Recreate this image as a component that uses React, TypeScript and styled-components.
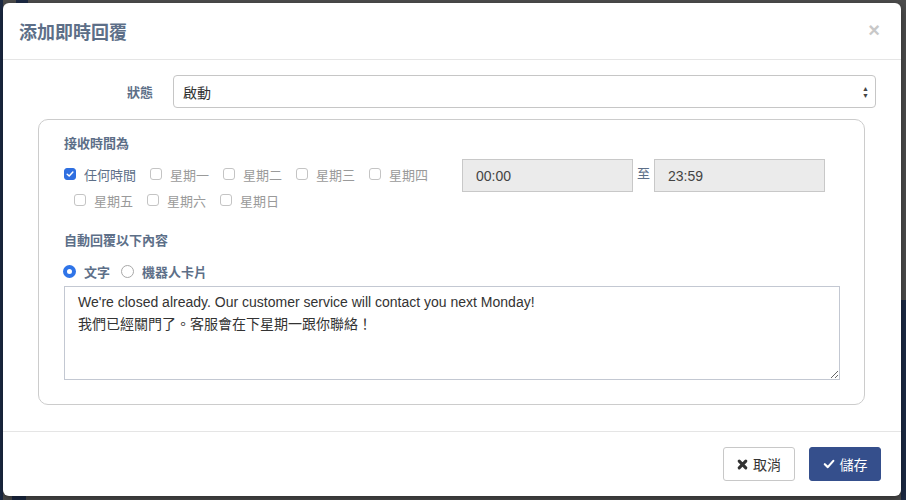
import React, { useState } from "react";
import styled, { createGlobalStyle } from "styled-components";

const GlobalStyle = createGlobalStyle`
  html, body {
    margin: 0;
    padding: 0;
    background: #4d4d4d;
    font-family: "Liberation Sans", "Noto Sans CJK TC", sans-serif;
  }
`;

const Backdrop = styled.div`
  position: relative;
  width: 906px;
  height: 500px;
  overflow: hidden;
  background: #4c4c4c;
`;

// bits of the page peeking out behind the overlay
const PageStrip = styled.div<{ $left: number; $top: number; $w: number; $h: number }>`
  position: absolute;
  left: ${(p) => p.$left}px;
  top: ${(p) => p.$top}px;
  width: ${(p) => p.$w}px;
  height: ${(p) => p.$h}px;
  background: #1c2a44;
`;

const Modal = styled.div`
  position: absolute;
  left: 3px;
  top: 3px;
  width: 898px;
  height: 493px;
  background: #fff;
  border-radius: 6px;
  display: flex;
  flex-direction: column;
  box-shadow: 0 3px 9px rgba(0, 0, 0, 0.4);
`;

const Header = styled.div`
  height: 56px;
  flex-shrink: 0;
  border-bottom: 1px solid #e5e5e5;
  display: flex;
  align-items: center;
  justify-content: space-between;
  padding: 0 21px 0 16px;
`;

const Title = styled.h4`
  margin: 0;
  font-size: 18px;
  font-weight: 600;
  color: #5d6f88;
  font-family: "Noto Sans CJK TC", sans-serif;
`;

const Close = styled.span`
  font-size: 20px;
  font-weight: bold;
  color: #c8c8c8;
  line-height: 1;
  margin-top: -3px;
`;

const Body = styled.div`
  flex: 1;
  padding: 15px 25px 0 35px;
`;

const StatusRow = styled.div`
  display: flex;
  align-items: center;
  gap: 20px;
`;

const FieldLabel = styled.label`
  width: 115px;
  text-align: right;
  font-size: 13px;
  font-weight: 600;
  color: #5d6f88;
`;

const SelectBox = styled.div`
  flex: 1;
  height: 33px;
  border: 1px solid #c6c6c6;
  border-radius: 4px;
  box-sizing: border-box;
  display: flex;
  align-items: center;
  justify-content: space-between;
  padding: 0 6px 0 9px;
  font-size: 14px;
  color: #333;
`;

const Arrows = styled.span`
  display: flex;
  flex-direction: column;
  font-size: 7px;
  line-height: 7px;
  color: #444;
`;

const Panel = styled.div`
  margin-top: 11px;
  width: 827px;
  height: 286px;
  box-sizing: border-box;
  border: 1px solid #cccccc;
  border-radius: 10px;
  padding: 15px 25px 0 25px;
`;

const SectionTitle = styled.div`
  font-size: 13px;
  font-weight: 600;
  color: #5d6f88;
  line-height: 18px;
`;

const TimeRow = styled.div`
  display: flex;
  margin-top: 8px;
`;

const Days = styled.div`
  width: 398px;
`;

const DayLine = styled.div<{ $indent?: number }>`
  display: flex;
  align-items: center;
  height: 26px;
  padding-left: ${(p) => p.$indent || 0}px;
`;

const Check = styled.span<{ $on?: boolean }>`
  width: 12px;
  height: 12px;
  border-radius: 3px;
  box-sizing: border-box;
  border: 1px solid ${(p) => (p.$on ? "#2f6fe0" : "#c4c4c4")};
  background: ${(p) => (p.$on ? "#2f6fe0" : "#fff")};
  display: inline-flex;
  align-items: center;
  justify-content: center;
  margin-right: 8px;
`;

const DayText = styled.span<{ $on?: boolean }>`
  font-size: 13px;
  color: ${(p) => (p.$on ? "#5d6f88" : "#9a9a9a")};
  margin-right: 14px;
  font-family: "Noto Sans CJK TC", sans-serif;
`;

const Times = styled.div`
  display: flex;
  align-items: flex-start;
  margin-top: -2px;
`;

const TimeInput = styled.div`
  width: 171px;
  height: 33px;
  box-sizing: border-box;
  background: #ebebeb;
  border: 1px solid #c8c8c8;
  font-size: 14px;
  color: #444;
  display: flex;
  align-items: center;
  padding-left: 13px;
`;

const To = styled.span`
  font-size: 13px;
  color: #5d6f88;
  width: 21px;
  text-align: center;
  line-height: 30px;
`;

const ReplyTitle = styled(SectionTitle)`
  margin-top: 19px;
`;

const RadioRow = styled.div`
  display: flex;
  align-items: center;
  height: 20px;
  margin: 11px 0 5px -1px;
`;

const Radio = styled.span<{ $on?: boolean }>`
  width: 13px;
  height: 13px;
  border-radius: 50%;
  box-sizing: border-box;
  border: ${(p) => (p.$on ? "4.5px solid #2f74e8" : "1px solid #a8a8a8")};
  background: #fff;
  margin-right: 8px;
`;

const RadioText = styled.span`
  font-size: 13px;
  font-weight: 600;
  color: #5d6f88;
  margin-right: 11px;
`;

const TextArea = styled.textarea`
  display: block;
  width: 776px;
  height: 94px;
  box-sizing: border-box;
  border: 1px solid #c3c8d2;
  padding: 4px 13px;
  font-family: "Liberation Sans", "Noto Sans CJK TC", sans-serif;
  font-size: 14px;
  line-height: 22px;
  color: #333;
  resize: vertical;
  outline: none;
`;

const Footer = styled.div`
  height: 64px;
  flex-shrink: 0;
  border-top: 1px solid #e5e5e5;
  display: flex;
  align-items: center;
  justify-content: flex-end;
  gap: 14px;
  padding: 0 20px 0 0;
`;

const Button = styled.button<{ $primary?: boolean }>`
  height: 34px;
  width: 72px;
  border-radius: 3px;
  font-size: 14px;
  font-family: "Liberation Sans", "Noto Sans CJK TC", sans-serif;
  display: inline-flex;
  align-items: center;
  justify-content: center;
  gap: 5px;
  border: 1px solid ${(p) => (p.$primary ? "#354f8c" : "#c8c8c8")};
  background: ${(p) => (p.$primary ? "#354f8c" : "#fff")};
  color: ${(p) => (p.$primary ? "#fff" : "#333")};
`;

const CheckMark = ({ size = 8, color = "#fff" }: { size?: number; color?: string }) => (
  <svg width={size} height={size} viewBox="0 0 10 10">
    <path d="M1.5 5.2 L4 7.6 L8.6 2.4" fill="none" stroke={color} strokeWidth="1.8" strokeLinecap="round" strokeLinejoin="round" />
  </svg>
);

const XMark = () => (
  <svg width="11" height="11" viewBox="0 0 10 10">
    <path d="M2 2 L8 8 M8 2 L2 8" stroke="#333" strokeWidth="2.8" strokeLinecap="round" />
  </svg>
);

const weekRow1 = ["星期一", "星期二", "星期三", "星期四"];
const weekRow2 = ["星期五", "星期六", "星期日"];

const App = () => {
  const [text, setText] = useState(
    "We're closed already. Our customer service will contact you next Monday!\n我們已經關門了。客服會在下星期一跟你聯絡！"
  );

  return (
    <Backdrop>
      <GlobalStyle />
      <PageStrip $left={0} $top={0} $w={3} $h={500} />
      <PageStrip $left={16} $top={0} $w={12} $h={3} />
      <PageStrip $left={901} $top={300} $w={5} $h={200} />
      <PageStrip $left={12} $top={496} $w={14} $h={4} />
      <Modal>
        <Header>
          <Title>添加即時回覆</Title>
          <Close>×</Close>
        </Header>
        <Body>
          <StatusRow>
            <FieldLabel>狀態</FieldLabel>
            <SelectBox>
              <span>啟動</span>
              <Arrows>
                <span>▲</span>
                <span>▼</span>
              </Arrows>
            </SelectBox>
          </StatusRow>
          <Panel>
            <SectionTitle>接收時間為</SectionTitle>
            <TimeRow>
              <Days>
                <DayLine>
                  <Check $on>
                    <CheckMark />
                  </Check>
                  <DayText $on>任何時間</DayText>
                  {weekRow1.map((d) => (
                    <React.Fragment key={d}>
                      <Check />
                      <DayText>{d}</DayText>
                    </React.Fragment>
                  ))}
                </DayLine>
                <DayLine $indent={10}>
                  {weekRow2.map((d) => (
                    <React.Fragment key={d}>
                      <Check />
                      <DayText>{d}</DayText>
                    </React.Fragment>
                  ))}
                </DayLine>
              </Days>
              <Times>
                <TimeInput>00:00</TimeInput>
                <To>至</To>
                <TimeInput>23:59</TimeInput>
              </Times>
            </TimeRow>
            <ReplyTitle>自動回覆以下內容</ReplyTitle>
            <RadioRow>
              <Radio $on />
              <RadioText>文字</RadioText>
              <Radio />
              <RadioText>機器人卡片</RadioText>
            </RadioRow>
            <TextArea value={text} onChange={(e) => setText(e.target.value)} />
          </Panel>
        </Body>
        <Footer>
          <Button>
            <XMark />
            取消
          </Button>
          <Button $primary>
            <CheckMark size={12} />
            儲存
          </Button>
        </Footer>
      </Modal>
    </Backdrop>
  );
};

export default App;
